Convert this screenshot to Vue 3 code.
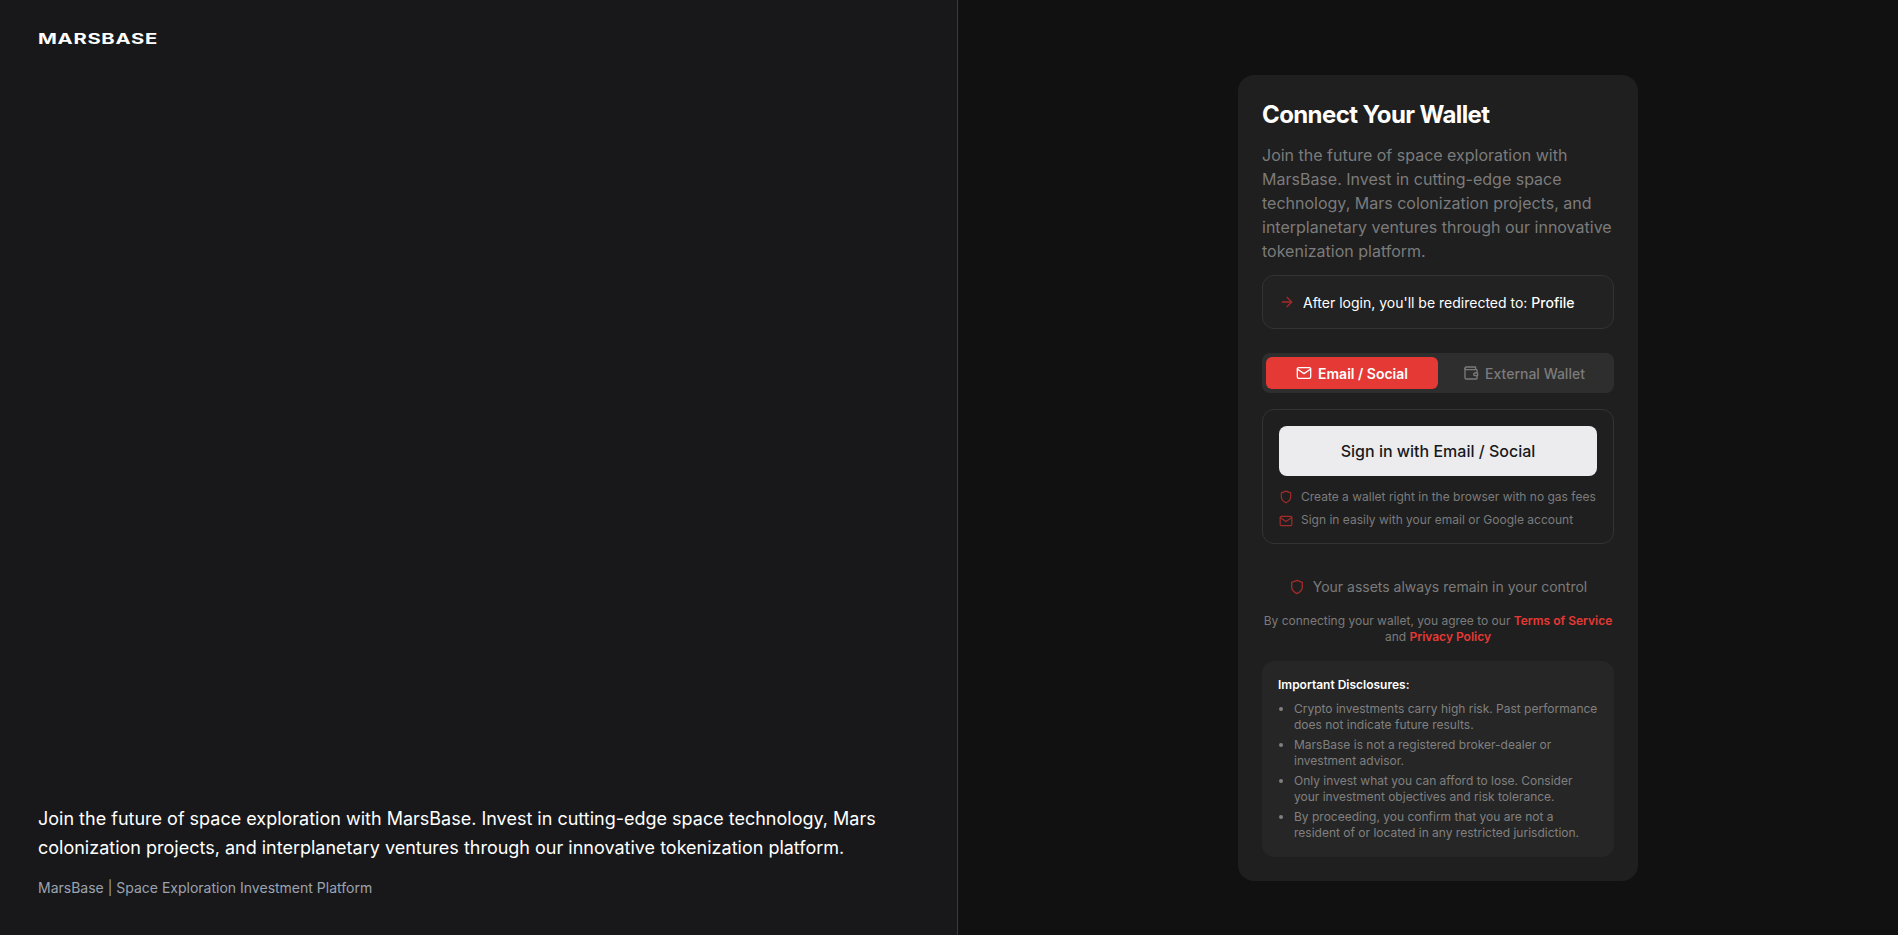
<script setup>
const bullets = [
  'Crypto investments carry high risk. Past performance does not indicate future results.',
  'MarsBase is not a registered broker-dealer or investment advisor.',
  'Only invest what you can afford to lose. Consider your investment objectives and risk tolerance.',
  'By proceeding, you confirm that you are not a resident of or located in any restricted jurisdiction.',
]
</script>

<template>
  <div class="page">
    <aside class="left">
      <div class="logo"><span class="logo-text">MARSBASE</span></div>
      <div class="pitch">
        <p class="pitch-main">Join the future of space exploration with MarsBase. Invest in cutting-edge space technology, Mars colonization projects, and interplanetary ventures through our innovative tokenization platform.</p>
        <p class="pitch-sub">MarsBase | Space Exploration Investment Platform</p>
      </div>
    </aside>
    <main class="right">
      <section class="card">
        <h1>Connect Your Wallet</h1>
        <p class="desc">Join the future of space exploration with MarsBase. Invest in cutting-edge space technology, Mars colonization projects, and interplanetary ventures through our innovative tokenization platform.</p>
        <div class="redirect">
          <svg class="ic red" width="16" height="16" viewBox="0 0 24 24"><path d="M5 12h14"/><path d="m12 5 7 7-7 7"/></svg>
          <span>After login, you'll be redirected to: <b>Profile</b></span>
        </div>
        <div class="tabs">
          <div class="tab active">
            <svg class="ic" width="16" height="16" viewBox="0 0 24 24"><rect x="2" y="4" width="20" height="16" rx="2"/><path d="m22 6-10 7L2 6"/></svg>
            Email / Social
          </div>
          <div class="tab">
            <svg class="ic" width="16" height="16" viewBox="0 0 24 24"><path d="M19 7V4a1 1 0 0 0-1-1H5a2 2 0 0 0 0 4h15a1 1 0 0 1 1 1v4h-3a2 2 0 0 0 0 4h3a1 1 0 0 0 1-1v-2a1 1 0 0 0-1-1"/><path d="M3 5v14a2 2 0 0 0 2 2h15a1 1 0 0 0 1-1v-4"/></svg>
            External Wallet
          </div>
        </div>
        <div class="panel">
          <button class="signin">Sign in with Email / Social</button>
          <div class="feat">
            <svg class="ic red" width="14" height="14" viewBox="0 0 24 24"><path d="M12 22s8-4 8-10V5l-8-3-8 3v7c0 6 8 10 8 10z"/></svg>
            <span>Create a wallet right in the browser with no gas fees</span>
          </div>
          <div class="feat">
            <svg class="ic red" width="14" height="14" viewBox="0 0 24 24"><rect x="2" y="4" width="20" height="16" rx="2"/><path d="m22 6-10 7L2 6"/></svg>
            <span>Sign in easily with your email or Google account</span>
          </div>
        </div>
        <div class="assets">
          <svg class="ic red" width="16" height="16" viewBox="0 0 24 24"><path d="M12 22s8-4 8-10V5l-8-3-8 3v7c0 6 8 10 8 10z"/></svg>
          <span>Your assets always remain in your control</span>
        </div>
        <p class="terms">By connecting your wallet, you agree to our <a>Terms of Service</a> and <a>Privacy Policy</a></p>
        <div class="disc">
          <h2>Important Disclosures:</h2>
          <ul>
            <li v-for="b in bullets" :key="b">{{ b }}</li>
          </ul>
        </div>
      </section>
    </main>
  </div>
</template>

<style>
html, body { margin: 0; background: #111111; }
</style>

<style scoped>
* { box-sizing: border-box; }
.page {
  display: flex;
  height: 935px;
  overflow: hidden;
  font-family: Inter, "Liberation Sans", sans-serif;
}
.left {
  width: 958px;
  background: #18181b;
  border-right: 1px solid #3a3a3d;
  padding: 32px 38px 37px;
  display: flex;
  flex-direction: column;
  justify-content: space-between;
}
.logo { height: 14px; display: flex; align-items: center; }
.logo-text {
  font-weight: 700;
  font-size: 14px;
  line-height: 14px;
  color: #fff;
  letter-spacing: 0.5px;
  transform: scaleX(1.445);
  transform-origin: left center;
}
.pitch-main {
  margin: 0;
  font-size: 18px;
  line-height: 29px;
  color: #fff;
  max-width: 880px;
}
.pitch-sub {
  margin: 16px 0 0;
  font-size: 14px;
  line-height: 20px;
  color: #9ca3af;
}
.right {
  flex: 1;
  display: flex;
  justify-content: center;
  padding: 75px 0 0 20px;
  background: #111111;
}
.card {
  width: 400px;
  height: 806px;
  padding: 24px;
  background: #1f1f1f;
  border-radius: 16px;
}
h1 {
  margin: 0;
  font-size: 24px;
  line-height: 32px;
  font-weight: 700;
  letter-spacing: -0.6px;
  color: #fff;
}
.desc {
  margin: 12px 0 0;
  font-size: 16px;
  line-height: 24px;
  color: #7b7b7b;
}
.ic {
  fill: none;
  stroke: currentColor;
  stroke-width: 2;
  stroke-linecap: round;
  stroke-linejoin: round;
  flex-shrink: 0;
}
.red { color: #a32b2b; }
.redirect {
  margin-top: 12px;
  height: 54px;
  display: flex;
  align-items: center;
  gap: 8px;
  padding: 0 16px;
  border: 1px solid #333333;
  border-radius: 12px;
  background: #222222;
  font-size: 14px;
  font-weight: 400;
  color: #fff;
}
.redirect b { font-weight: 500; }
.tabs {
  margin-top: 24px;
  height: 40px;
  padding: 4px;
  display: flex;
  background: #2e2e2e;
  border-radius: 8px;
}
.tab {
  flex: 1;
  display: flex;
  align-items: center;
  justify-content: center;
  gap: 6px;
  border-radius: 6px;
  font-size: 14px;
  font-weight: 500;
  color: #7b7b7b;
}
.tab.active { background: #e53935; color: #fff; font-weight: 600; }
.panel {
  margin-top: 16px;
  height: 135px;
  padding: 16px;
  border: 1px solid #333333;
  border-radius: 12px;
}
.signin {
  display: block;
  width: 100%;
  height: 50px;
  border: 0;
  border-radius: 8px;
  background: #ececee;
  color: #18181b;
  font-family: inherit;
  font-size: 16px;
  font-weight: 500;
}
.feat {
  height: 24px;
  display: flex;
  align-items: center;
  gap: 8px;
  font-size: 12px;
  color: #7b7b7b;
}
.feat .ic { margin-top: 2px; }
.signin + .feat { margin-top: 8px; }
.feat + .feat { margin-top: -1px; }
.feat + .feat .ic { margin-top: 4px; }
.assets {
  margin-top: 33px;
  display: flex;
  align-items: center;
  justify-content: center;
  gap: 8px;
  font-size: 14px;
  line-height: 20px;
  color: #7b7b7b;
}
.terms {
  margin: 16px 0 0;
  text-align: center;
  font-size: 12px;
  line-height: 16px;
  color: #7b7b7b;
}
.terms a { color: #e53935; font-weight: 600; }
.disc {
  margin-top: 16px;
  height: 196px;
  padding: 16px;
  background: #262626;
  border-radius: 12px;
}
h2 {
  margin: 0;
  font-size: 12px;
  line-height: 16px;
  font-weight: 600;
  color: #fff;
}
ul {
  margin: 8px 0 0;
  padding: 0 0 0 16px;
  list-style: disc;
  font-size: 12px;
  line-height: 16px;
  color: #808080;
}
li + li { margin-top: 4px; }
</style>
